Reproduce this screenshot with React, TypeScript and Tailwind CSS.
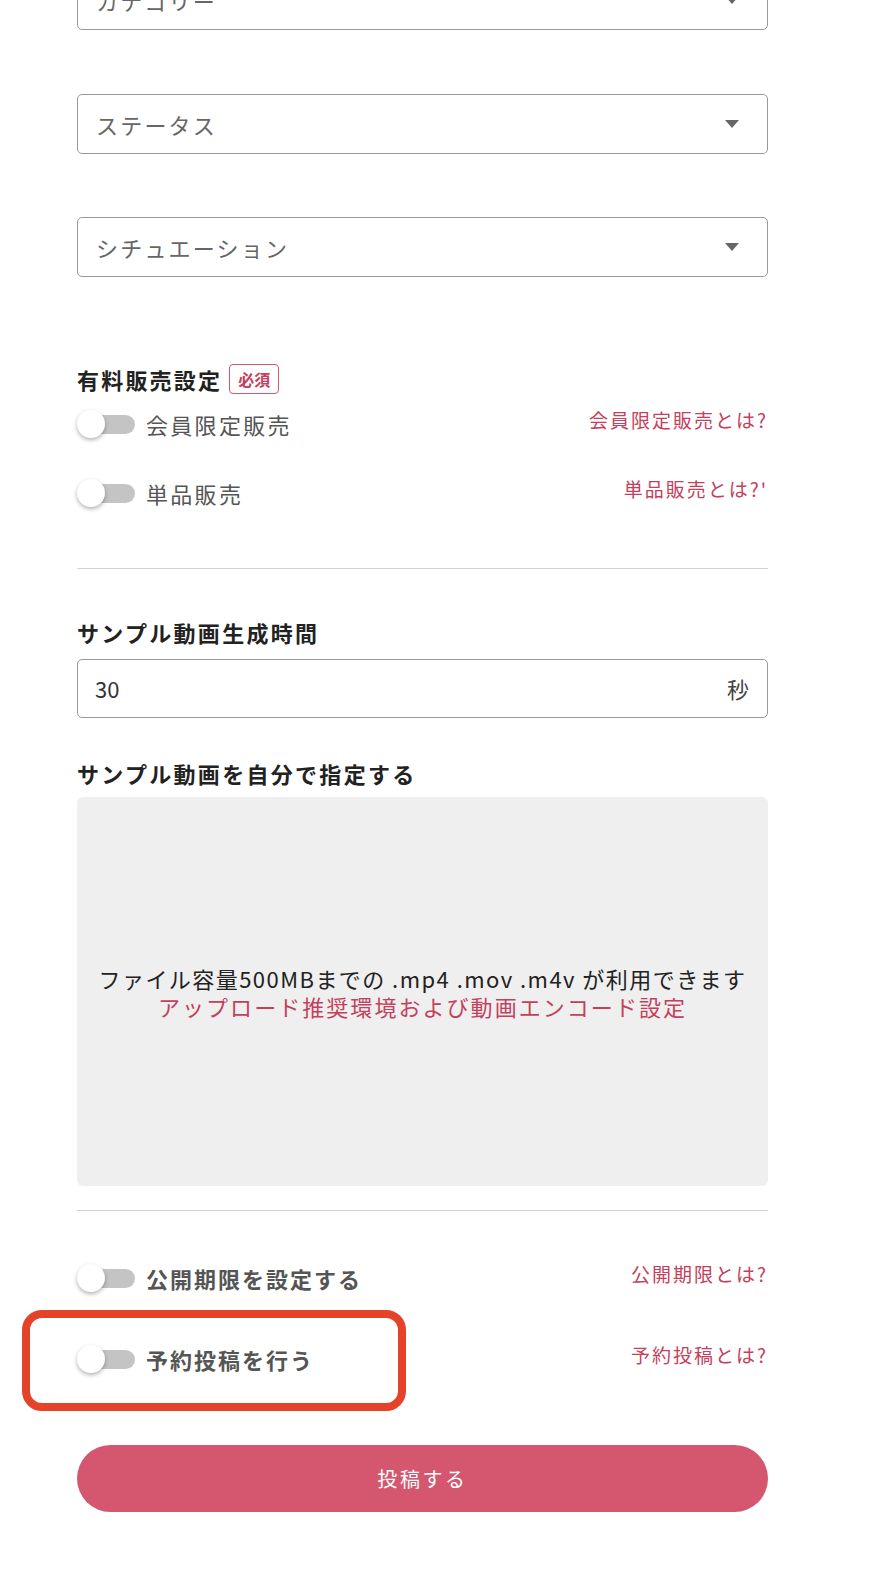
import React from "react";

const font = { fontFamily: '"Noto Sans CJK JP", "Noto Sans", sans-serif' };

function SelectBox({ label, className = "" }: { label: string; className?: string }) {
  return (
    <div
      className={`flex h-[60px] items-center justify-between rounded-[5px] border border-[#9a9a9a] bg-white pl-[18px] pr-[28px] ${className}`}
    >
      <span className="text-[22px] tracking-[2.2px] text-[#666]">{label}</span>
      <svg width="14" height="8" viewBox="0 0 14 8">
        <path d="M0 0h14L7 8z" fill="#666" />
      </svg>
    </div>
  );
}

function Switch() {
  return (
    <div className="relative h-[28px] w-[58px] shrink-0">
      <div className="absolute left-[8px] top-[5px] h-[19px] w-[50px] rounded-full bg-[#c4c4c4]" />
      <div className="absolute left-0 top-0 h-[28px] w-[28px] rounded-full bg-white shadow-[0_2px_4px_rgba(0,0,0,0.3)]" />
    </div>
  );
}

interface ToggleRowProps {
  label: string;
  link: string;
  bold?: boolean;
  highlight?: boolean;
  className?: string;
}

function ToggleRow({ label, link, bold, highlight, className = "" }: ToggleRowProps) {
  return (
    <div className={`relative flex h-[28px] items-center justify-between ${className}`}>
      <div className="flex items-center gap-[11px]">
        <Switch />
        <span
          className={`text-[22px] leading-[28px] text-[#555] ${bold ? "font-bold tracking-[2px]" : "tracking-[2.3px]"}`}
        >
          {label}
        </span>
      </div>
      <a className="-mt-[8px] text-[19px] leading-[28px] tracking-[2px] text-[#c4405c]">{link}</a>
      {/* annotation frame */}
      {highlight && (
        <div className="pointer-events-none absolute -left-[55px] -top-[35px] h-[101px] w-[384px] rounded-[20px] border-[8px] border-[#e5422a]" />
      )}
    </div>
  );
}

export default function App() {
  return (
    <div className="min-h-screen overflow-hidden bg-white pl-[77px]" style={font}>
      <div className="w-[691px]">
        <SelectBox label="カテゴリー" className="-mt-[30px]" />
        <SelectBox label="ステータス" className="mt-[64px]" />
        <SelectBox label="シチュエーション" className="mt-[63px]" />

        <div className="mt-[87px] flex h-[30px] items-center gap-[7px]">
          <h2 className="text-[22px] font-bold leading-[30px] tracking-[2.2px] text-[#222]">有料販売設定</h2>
          <span className="rounded-[4px] border border-[#d4566f] px-[8px] text-[16px] font-bold leading-[28px] text-[#c4405c]">
            必須
          </span>
        </div>
        <ToggleRow label="会員限定販売" link="会員限定販売とは?" className="mt-[16px]" />
        <ToggleRow label="単品販売" link="単品販売とは?'" className="mt-[41px]" />

        <div className="mt-[61px] h-px bg-[#d2d2d2]" />

        <h2 className="mt-[48px] text-[22px] font-bold leading-[30px] tracking-[2.3px] text-[#222]">
          サンプル動画生成時間
        </h2>
        <div className="mt-[12px] flex h-[59px] items-center justify-between rounded-[5px] border border-[#9a9a9a] pl-[17px] pr-[18px]">
          <span className="text-[22px] text-[#333]">30</span>
          <span className="text-[22px] text-[#444]">秒</span>
        </div>

        <h2 className="mt-[40px] text-[22px] font-bold leading-[30px] tracking-[2.3px] text-[#222]">
          サンプル動画を自分で指定する
        </h2>
        <div className="mt-[9px] flex h-[389px] flex-col items-center justify-center rounded-[6px] bg-[#efefef] text-center">
          <p className="text-[22px] leading-[28px] tracking-[1.45px] text-[#222]">
            ファイル容量500MBまでの .mp4 .mov .m4v が利用できます
          </p>
          <a className="text-[22px] leading-[28px] tracking-[2.05px] text-[#c4405c]">
            アップロード推奨環境および動画エンコード設定
          </a>
        </div>

        <div className="mt-[24px] h-px bg-[#d2d2d2]" />

        <ToggleRow label="公開期限を設定する" link="公開期限とは?" bold className="mt-[53px]" />
        <ToggleRow label="予約投稿を行う" link="予約投稿とは?" bold highlight className="mt-[53px]" />

        <button className="mt-[72px] flex h-[67px] w-full items-center justify-center rounded-full bg-[#d4566f] text-[20px] tracking-[2.6px] text-white">
          投稿する
        </button>
      </div>
    </div>
  );
}
